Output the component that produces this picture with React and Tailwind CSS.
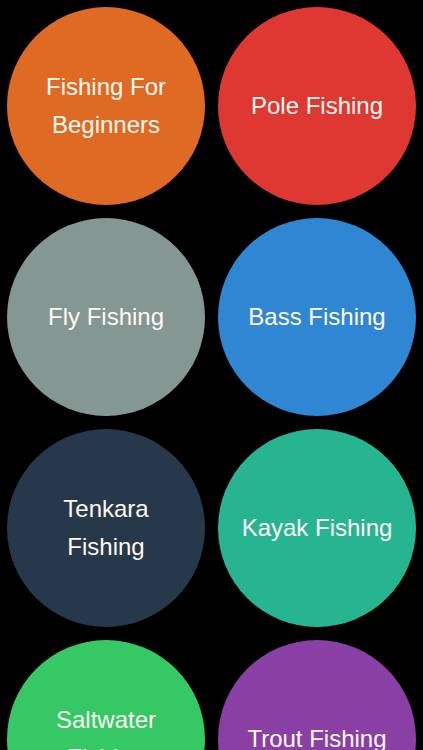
const topics = [
  { label: ["Fishing For", "Beginners"], color: "bg-[#df6a24]" },
  { label: ["Pole Fishing"], color: "bg-[#df3833]" },
  { label: ["Fly Fishing"], color: "bg-[#859793]" },
  { label: ["Bass Fishing"], color: "bg-[#2f86d2]" },
  { label: ["Tenkara", "Fishing"], color: "bg-[#27384a]" },
  { label: ["Kayak Fishing"], color: "bg-[#27b591]" },
  { label: ["Saltwater", "Fishing"], color: "bg-[#35c865]" },
  { label: ["Trout Fishing"], color: "bg-[#8a3fa4]" },
];

function TopicCircle({ label, color }) {
  return (
    <button
      className={`${color} w-[198px] h-[198px] rounded-full flex flex-col items-center justify-center text-[#fffaf3] text-[24px] leading-[38px] font-['Liberation_Sans',sans-serif]`}
    >
      {label.map((line) => (
        <span key={line}>{line}</span>
      ))}
    </button>
  );
}

export default function App() {
  return (
    <div className="bg-black h-[750px] overflow-hidden">
      <div className="grid grid-cols-2 gap-x-[13px] gap-y-[13px] p-[7px]">
        {topics.map((t) => (
          <TopicCircle key={t.label.join(" ")} {...t} />
        ))}
      </div>
    </div>
  );
}
